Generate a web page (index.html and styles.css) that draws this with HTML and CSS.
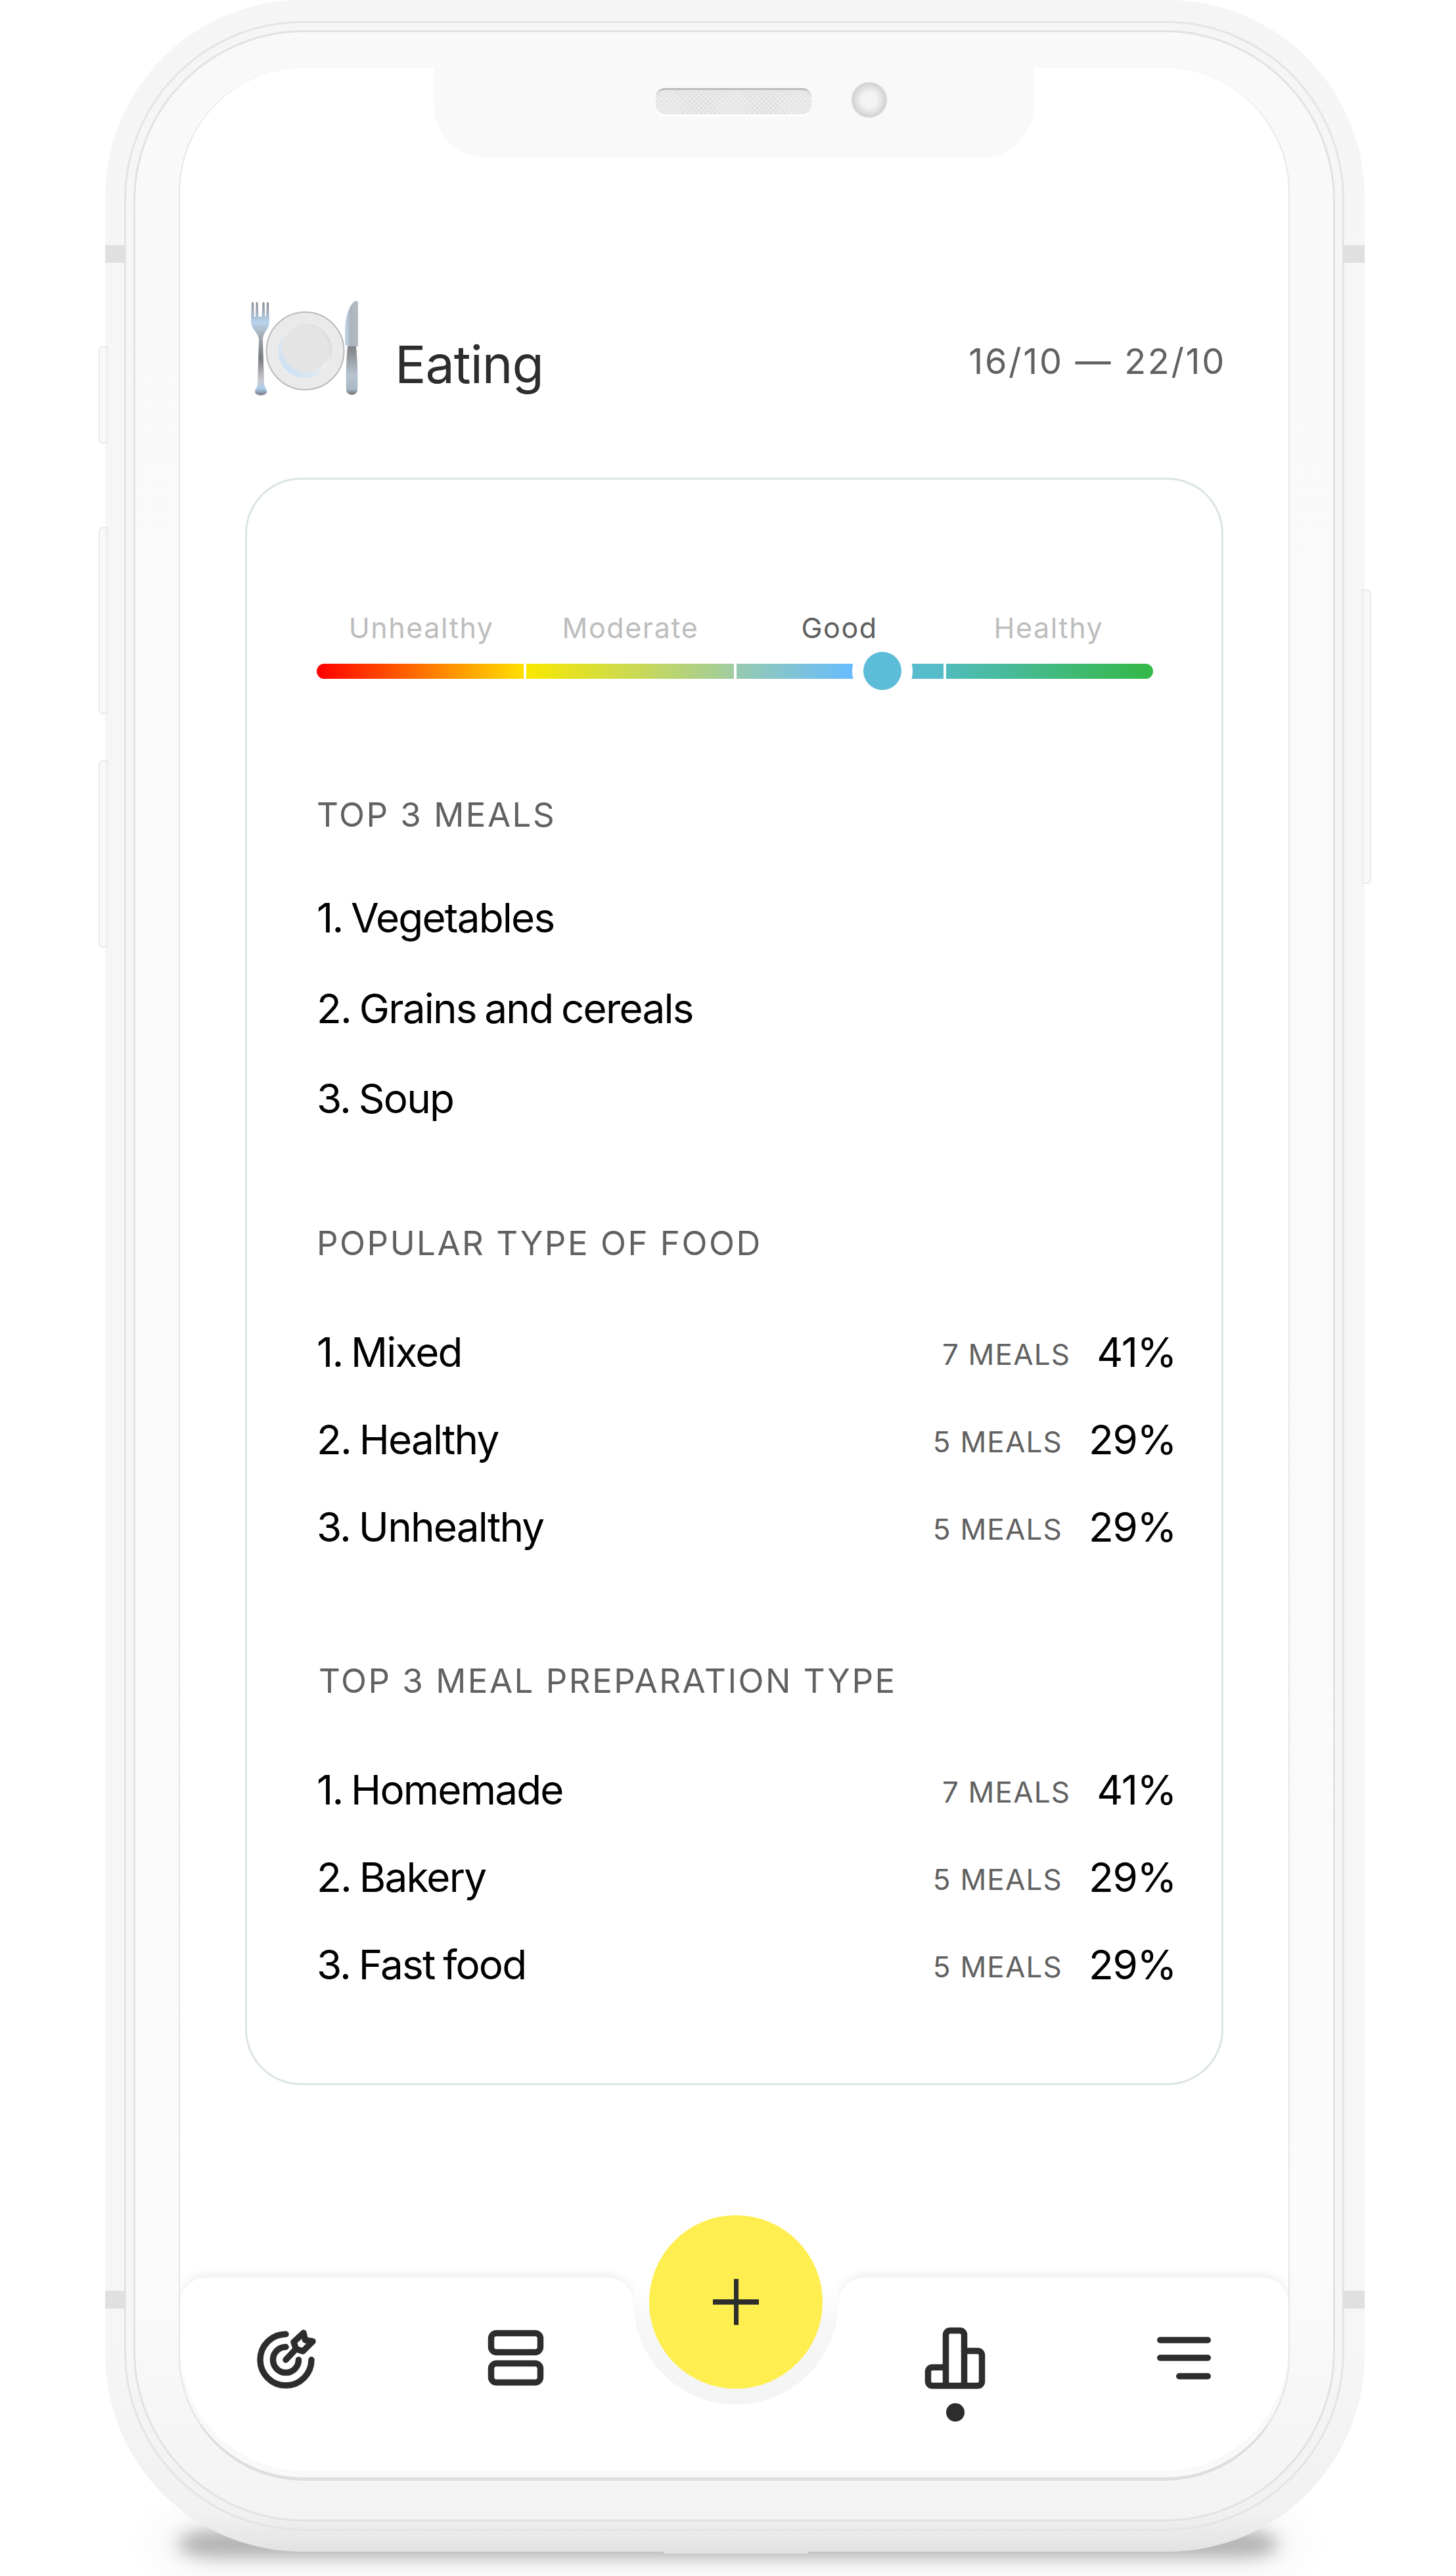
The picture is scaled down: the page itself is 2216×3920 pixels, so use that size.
FILE: index.html
```html
<!DOCTYPE html>
<html>
<head>
    <title>Eating</title>
    <link rel="stylesheet" href="styles.css">
</head>

<body>
    <div class="shadow"></div>
    <div class="phone">
        <!-- side buttons and antenna bands -->
        <span class="side-btn btn-1"></span>
        <span class="side-btn btn-2"></span>
        <span class="side-btn btn-3"></span>
        <span class="side-btn btn-4"></span>
        <span class="band band-tl"></span>
        <span class="band band-tr"></span>
        <span class="band band-bl"></span>
        <span class="band band-br"></span>
        <span class="foot"></span>

        <div class="ring-outer">
            <div class="ring-inner">
                <div class="screen">
                    <div class="screen-body">
                        <header class="head">
                            <div class="head-title">
                                <svg class="plate-icon" viewBox="0 0 180 150" width="180" height="150">
                                    <defs>
                                        <linearGradient id="steel" x1="0" y1="0" x2="0" y2="1">
                                            <stop offset="0" stop-color="#8a8c90"/>
                                            <stop offset="0.22" stop-color="#b9d4ee"/>
                                            <stop offset="0.36" stop-color="#a5adb5"/>
                                            <stop offset="0.6" stop-color="#77797d"/>
                                            <stop offset="0.84" stop-color="#c9cbce"/>
                                            <stop offset="0.93" stop-color="#a9cbec"/>
                                            <stop offset="1" stop-color="#77797d"/>
                                        </linearGradient>
                                        <linearGradient id="blade" x1="0" y1="0" x2="1" y2="0">
                                            <stop offset="0" stop-color="#c4daef"/>
                                            <stop offset="0.4" stop-color="#acb5bd"/>
                                            <stop offset="1" stop-color="#b3bcc4"/>
                                        </linearGradient>
                                        <linearGradient id="handle" x1="0" y1="0" x2="0" y2="1">
                                            <stop offset="0" stop-color="#808285"/>
                                            <stop offset="0.6" stop-color="#b7c4d0"/>
                                            <stop offset="0.88" stop-color="#a8b8c6"/>
                                            <stop offset="1" stop-color="#6f7174"/>
                                        </linearGradient>
                                        <linearGradient id="rim" x1="0" y1="1" x2="1" y2="0">
                                            <stop offset="0.12" stop-color="#c8e0f5"/>
                                            <stop offset="0.55" stop-color="#eeeeee"/>
                                            <stop offset="1" stop-color="#cccccc"/>
                                        </linearGradient>
                                    </defs>
                                    <path fill="url(#steel)" d="M8 5 Q9.500 2 11 5 L12 26 L14 26 L14.500 5 Q16 2 17.500 5 L18.500 26 L23.500 26 L24.500 5 Q26 2 27.500 5 L28.500 26 L30 26 L31 5 Q32.500 2 34 5 L35 32 C35 46 26 48 25 60 L27 128 C28 134 32 137 31 141 C29 147 15 147 13 141 C12 137 17 134 17 128 L19 60 C17 48 7 46 7 32 Z"/>
                                    <circle cx="89.500" cy="78" r="59" fill="#eaeaea" stroke="#b4bbc1" stroke-width="2"/>
                                    <circle cx="89.500" cy="78" r="41" fill="url(#rim)"/>
                                    <circle cx="90.500" cy="74.500" r="36" fill="#e4e4e4"/>
                                    <path fill="url(#blade)" d="M170 4 Q168 0 163 4 C155 12 150 28 150 48 L150 68 Q152 72 170 71 Z"/>
                                    <path fill="url(#handle)" d="M154 71 L167 71 C169 90 170 120 169 138 C168 147 153 147 152 138 C151 120 152 90 154 71 Z"/>
                                </svg>
                                <h1 class="eating">Eating</h1>
                            </div>
                            <div class="dates">16/10 — 22/10</div>
                        </header>

                        <div class="card">
                            <div class="scale">
                                <div class="scale-labels">
                                    <span>Unhealthy</span>
                                    <span>Moderate</span>
                                    <span class="on">Good</span>
                                    <span>Healthy</span>
                                </div>
                                <div class="scale-bar">
                                    <i class="seg seg-1"></i>
                                    <i class="seg seg-2"></i>
                                    <i class="seg seg-3"></i>
                                    <i class="seg seg-4"></i>
                                    <b class="thumb"></b>
                                </div>
                            </div>

                            <h2 class="sec-title first">TOP 3 MEALS</h2>
                            <div class="item tall">1. Vegetables</div>
                            <div class="item tall">2. Grains and cereals</div>
                            <div class="item tall">3. Soup</div>

                            <h2 class="sec-title second">POPULAR TYPE OF FOOD</h2>
                            <div class="item">
                                <span>1. Mixed</span>
                                <span class="stat"><small>7 MEALS</small>41%</span>
                            </div>
                            <div class="item">
                                <span>2. Healthy</span>
                                <span class="stat"><small>5 MEALS</small>29%</span>
                            </div>
                            <div class="item">
                                <span>3. Unhealthy</span>
                                <span class="stat"><small>5 MEALS</small>29%</span>
                            </div>

                            <h2 class="sec-title third">TOP 3 MEAL PREPARATION TYPE</h2>
                            <div class="item">
                                <span>1. Homemade</span>
                                <span class="stat"><small>7 MEALS</small>41%</span>
                            </div>
                            <div class="item">
                                <span>2. Bakery</span>
                                <span class="stat"><small>5 MEALS</small>29%</span>
                            </div>
                            <div class="item">
                                <span>3. Fast food</span>
                                <span class="stat"><small>5 MEALS</small>29%</span>
                            </div>
                        </div>

                        <nav class="tabbar">
                            <div class="panel panel-left">
                                <svg class="tab-icon" viewBox="0 0 100 100">
                                    <path d="M50 11 A39 39 0 1 0 89 50"/>
                                    <path d="M50 30.500 A19.500 19.500 0 1 0 69.500 50"/>
                                    <path d="M50 50 L65 34"/>
                                    <path d="M77 9 L79.500 20 L91 22 L76 37 L65.500 33.500 L62 23 Z"/>
                                </svg>
                                <svg class="tab-icon" viewBox="0 0 100 100">
                                    <rect x="12.500" y="9.500" width="75" height="29" rx="8"/>
                                    <rect x="12.500" y="55.500" width="75" height="29" rx="8"/>
                                </svg>
                            </div>
                            <div class="fab-ring">
                                <button class="fab"><span class="plus"></span></button>
                            </div>
                            <div class="panel panel-right">
                                <div class="tab-active">
                                    <svg class="tab-icon" viewBox="0 0 100 100">
                                        <path d="M35.500 89.500 V12 a6.500 6.500 0 0 1 6.500 -6.500 H57 a6.500 6.500 0 0 1 6.500 6.500 V89.500"/>
                                        <path d="M63.500 36.500 H84 a6.500 6.500 0 0 1 6.500 6.500 V83 a6.500 6.500 0 0 1 -6.500 6.500 H15 a6.500 6.500 0 0 1 -6.500 -6.500 V68 a6.500 6.500 0 0 1 6.500 -6.500 H35.500"/>
                                    </svg>
                                    <span class="dot"></span>
                                </div>
                                <svg class="tab-icon" viewBox="0 0 100 100">
                                    <path d="M13.750 20 H86.250"/>
                                    <path d="M13.750 47 H86.250"/>
                                    <path d="M42.750 75 H86.250"/>
                                </svg>
                            </div>
                        </nav>
                    </div>
                </div>
            </div>
        </div>

        <!-- notch sits over the screen -->
        <div class="notch">
            <span class="speaker"></span>
            <span class="camera"></span>
        </div>
    </div>
</body>

</html>
```

FILE: styles.css
```css
* {
    box-sizing: border-box;
}

html, body {
    margin: 0;
    padding: 0;
    background: #fff;
}

body {
    width: 2216px;
    height: 3920px;
    position: relative;
    overflow: hidden;
    font-family: Inter, "Liberation Sans", sans-serif;
    color: #000;
}

/* phone body */
.shadow {
    position: absolute;
    left: 270px;
    right: 270px;
    top: 3850px;
    height: 42px;
    border-radius: 120px / 40px;
    background: rgba(0, 0, 0, 0.3);
    box-shadow: 0 0 50px 40px rgba(0, 0, 0, 0.03);
    filter: blur(13px);
}

.phone {
    position: relative;
    width: 1917px;
    height: 3883px;
    margin-left: 160px;
    padding: 32px 31px 32px 29px;
    border-radius: 300px;
    background: linear-gradient(#f5f5f5, #f6f6f6 10%, #f6f6f6 92%, #f1f1f1 98.500%, #e2e2e2);
}

.foot {
    position: absolute;
    left: 850px;
    bottom: -3px;
    width: 220px;
    height: 3px;
    border-radius: 4px 4px 0 0;
    background: #e2e2e2;
}

.ring-outer {
    height: 100%;
    padding: 11px;
    border: 3px solid #e4e4e4;
    border-radius: 272px;
}

.ring-inner {
    height: 100%;
    padding: 54px 66px 59px;
    border: 3px solid #e2e2e2;
    border-radius: 260px;
    background: linear-gradient(#f9f9f9, #fbfbfb 90%, #f3f3f3);
}

.screen {
    height: 100%;
    border-radius: 190px;
    border-left: 2px solid #e6e6e6;
    border-right: 2px solid #e6e6e6;
    border-bottom: 5px solid #dedede;
    background: #f9f9f9;
    overflow: hidden;
}

.screen-body {
    height: calc(100% - 10px);
    display: flex;
    flex-direction: column;
    background: #fff;
    border-radius: 190px;
    overflow: hidden;
}

.side-btn {
    position: absolute;
    width: 14px;
    border: 2px solid #e9e9e9;
    background: #f8f8f8;
}

.btn-1 { left: -10px; top: 527px; height: 148px; border-radius: 6px 0 0 6px; }
.btn-2 { left: -10px; top: 802px; height: 285px; border-radius: 6px 0 0 6px; }
.btn-3 { left: -10px; top: 1157px; height: 285px; border-radius: 6px 0 0 6px; }
.btn-4 { right: -10px; top: 897px; height: 448px; border-radius: 0 6px 6px 0; }

.band {
    position: absolute;
    height: 27px;
    background: #e0e0e0;
}

.band-tl { left: 0; width: 30px; top: 373px; }
.band-tr { right: 0; width: 33px; top: 373px; }
.band-bl { left: 0; width: 30px; top: 3486px; }
.band-br { right: 0; width: 33px; top: 3486px; }

/* notch */
.notch {
    position: absolute;
    left: 500px;
    top: 103px;
    width: 914px;
    height: 137px;
    padding: 31px 225px 0 338px;
    display: flex;
    justify-content: space-between;
    background: #f9f9f9;
    border-radius: 0 0 80px 80px;
}

.speaker {
    width: 237px;
    height: 40px;
    border-radius: 14px;
    background-color: #ededed;
    background-image:
        repeating-linear-gradient(45deg, #dcdcdc 0 1px, transparent 1px 5px),
        repeating-linear-gradient(-45deg, #dcdcdc 0 1px, transparent 1px 5px);
    border-top: 3px solid #bdbdbd;
    box-shadow: 0 3px 0 #fff;
}

.camera {
    width: 56px;
    height: 56px;
    margin-top: -10px;
    margin-right: -2px;
    border-radius: 50%;
    background: radial-gradient(circle at 50% 50%, #f3f3f3 0 30%, #d9d9d9 58%, #cfcfcf 64%, #ececec 68%);
}

/* header */
.head {
    display: flex;
    justify-content: space-between;
    align-items: flex-end;
    height: 500px;
    padding: 0 100px 0 101px;
    flex: none;
}

.head-title {
    display: flex;
    align-items: flex-end;
}

.plate-icon {
    display: block;
    margin-bottom: -3px;
}

.eating {
    margin: 0 0 4px 46px;
    font-size: 79px;
    line-height: 90px;
    font-weight: 440;
    color: #2d2d2d;
    letter-spacing: -1px;
}

.dates {
    font-size: 54px;
    line-height: 60px;
    color: #616161;
    margin-bottom: 23px;
    letter-spacing: 2.700px;
    margin-right: -5px;
}

/* card */
.card {
    flex: none;
    height: 2446px;
    margin: 124px 99px 0;
    padding: 195px 69px 0 106px;
    border: 3px solid #dbe5e3;
    border-radius: 85px;
}

.scale {
    margin-right: 35px;
}

.scale-labels {
    display: grid;
    grid-template-columns: repeat(4, 1fr);
    text-align: center;
    font-size: 43px;
    line-height: 60px;
    color: #bdbdbd;
    letter-spacing: 1.600px;
}

.scale-labels .on {
    color: #5f5f5f;
}

.scale-bar {
    position: relative;
    display: grid;
    grid-template-columns: repeat(4, 1fr);
    gap: 4px;
    margin-top: 25px;
    height: 23px;
}

.seg-1 {
    border-radius: 12px 0 0 12px;
    background: linear-gradient(90deg, #ff0000, #ffe000);
}

.seg-2 {
    background: linear-gradient(90deg, #f8e800, #a0cca0);
}

.seg-3 {
    background: linear-gradient(90deg, #96cab0, #66bcff 57%, #5cbcd6 60%, #55bcc8);
}

.seg-4 {
    border-radius: 0 12px 12px 0;
    background: linear-gradient(90deg, #50bcbc, #34b846);
}

.thumb {
    position: absolute;
    left: 832px;
    top: -18px;
    width: 58px;
    height: 58px;
    border-radius: 50%;
    background: #5dbcd8;
    box-shadow: 0 0 0 17px #fff;
}

.sec-title {
    margin: 0;
    font-size: 51px;
    line-height: 60px;
    font-weight: 440;
    color: #616161;
    letter-spacing: 2.500px;
}

.sec-title.first { margin-top: 177px; margin-bottom: 58px; }
.sec-title.second { margin-top: 121px; margin-bottom: 69px; }
.sec-title.third { margin-top: 138px; margin-bottom: 69px; padding-left: 3px; }

.item {
    height: 133px;
    display: flex;
    justify-content: space-between;
    align-items: center;
    font-size: 62px;
    font-weight: 440;
    letter-spacing: -1.800px;
    word-spacing: -3px;
}

.item.tall {
    height: 137.500px;
}

.stat {
    display: flex;
    align-items: baseline;
    font-weight: 400;
    letter-spacing: -1.400px;
}

.stat small {
    margin-right: 40px;
    font-size: 44px;
    color: #616161;
    letter-spacing: 1.200px;
    word-spacing: 0;
    transform: translateY(-3px);
}

/* bottom bar */
.tabbar {
    flex: 1;
    margin-top: 293px;
    display: flex;
    isolation: isolate;
}

.panel {
    position: relative;
    display: flex;
    align-items: flex-start;
    padding-top: 75px;
    background: #fff;
    border-radius: 40px 40px 0 0;
}

/* only the top of each panel throws a shadow */
.panel::before {
    content: "";
    position: absolute;
    left: 0;
    right: 0;
    top: 0;
    height: 44px;
    border-radius: 40px 40px 0 0;
    box-shadow: 0 -6px 14px rgba(0, 0, 0, 0.06);
    z-index: -1;
}

.panel-left {
    width: 690px;
    padding-left: 111px;
    gap: 250px;
}

.panel-right {
    flex: 1;
    padding-left: 128px;
    gap: 248px;
}

.tab-icon {
    display: block;
    width: 100px;
    height: 100px;
    fill: none;
    stroke: #2d2d2d;
    stroke-width: 9.500;
    stroke-linecap: round;
    stroke-linejoin: round;
}

.tab-active {
    display: flex;
    flex-direction: column;
    align-items: center;
}

.dot {
    width: 28px;
    height: 28px;
    margin-top: 16px;
    border-radius: 50%;
    background: #2d2d2d;
}

.fab-ring {
    position: relative;
    flex: none;
    width: 312px;
    height: 312px;
    margin-top: -119px;
    padding: 24px;
    border-radius: 50%;
    background: linear-gradient(#fff 42%, #f7f7f7 60%, #f4f4f4);
}

.fab {
    position: relative;
    display: block;
    width: 264px;
    height: 264px;
    padding: 0;
    border: none;
    border-radius: 50%;
    background: #ffee4f;
}

.plus {
    position: absolute;
    left: 97px;
    top: 97px;
    width: 70px;
    height: 70px;
    background:
        linear-gradient(#2d2d2d, #2d2d2d) center / 70px 8px no-repeat,
        linear-gradient(#2d2d2d, #2d2d2d) center / 7px 70px no-repeat;
}
```
